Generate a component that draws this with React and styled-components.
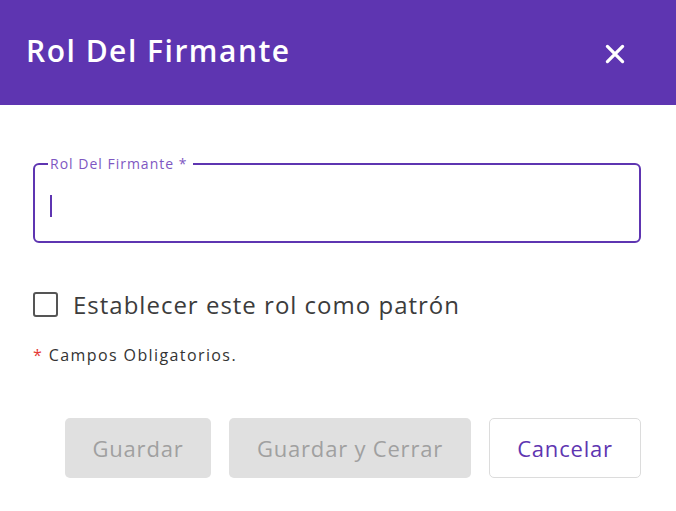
import React from 'react'
import styled, { createGlobalStyle } from 'styled-components'

const Global = createGlobalStyle`
  html, body { margin:0; padding:0; background:#fff; }
  body { font-family: "Open Sans", "Noto Sans", sans-serif; }
  * { box-sizing:border-box; }
`

function App() {
  return (
    <Dialog>
      <Global />
      <Header>
        <h1>Rol Del Firmante</h1>
        <Close aria-label="cerrar">
          <svg width="26" height="26" viewBox="0 0 24 24">
            <path d="M5 5 L19 19 M19 5 L5 19" stroke="#fff" strokeWidth="3" strokeLinecap="round" />
          </svg>
        </Close>
      </Header>
      <Body>
        <Field>
          <legend>Rol Del Firmante *</legend>
          <Caret />
        </Field>
        <Check>
          <span className="box" />
          <span>Establecer este rol como patrón</span>
        </Check>
        <Note><span>*</span> Campos Obligatorios.</Note>
        <Actions>
          <Button disabled w={146}>Guardar</Button>
          <Button disabled w={242}>Guardar y Cerrar</Button>
          <Button outline w={152}>Cancelar</Button>
        </Actions>
      </Body>
    </Dialog>
  )
}

const Dialog = styled.div`
  width:676px;
  height:511px;
  background:#fff;
  overflow:hidden;
`
const Header = styled.div`
  height:105px;
  background:#5e35b1;
  display:flex;
  align-items:center;
  justify-content:space-between;
  padding:0 48px 0 26px;
  h1{
    margin:0 0 4px 0;
    color:#fff;
    font-size:30px;
    font-weight:600;
    letter-spacing:1.5px;
  }
`
const Close = styled.div`
  display:flex;
  margin-top:2px;
`
const Body = styled.div`
  padding:0 35px 0 33px;
`
const Field = styled.fieldset`
  margin:52px 0 0 0;
  height:86px;
  border:2px solid #5e35b1;
  border-radius:6px;
  padding:0 0 0 15px;
  legend{
    padding:0 6px 0 2px;
    margin-left:-2px;
    font-size:14px;
    color:#7e57c2;
    line-height:14px;
    letter-spacing:1px;
  }
`
const Caret = styled.div`
  width:2px;
  height:22px;
  background:#5e35b1;
  margin-top:24px;
`
const Check = styled.div`
  display:flex;
  align-items:center;
  gap:15px;
  margin-top:45px;
  font-size:24px;
  letter-spacing:1px;
  color:#3c3c3c;
  .box{
    width:25px;
    height:25px;
    border:2px solid #555;
    border-radius:3px;
  }
`
const Note = styled.div`
  margin-top:24px;
  font-size:16px;
  line-height:20px;
  letter-spacing:1.4px;
  color:#333;
  span{ color:#e53935; }
`
const Actions = styled.div`
  display:flex;
  justify-content:flex-end;
  gap:18px;
  margin-top:53px;
`
const Button = styled.button`
  width:${p => p.w}px;
  height:60px;
  border-radius:5px;
  font-family:inherit;
  font-size:22px;
  letter-spacing:0.8px;
  border:${p => p.outline ? '1px solid #dcdcdc' : 'none'};
  background:${p => p.outline ? '#fff' : '#e0e0e0'};
  color:${p => p.outline ? '#5e35b1' : '#a0a0a0'};
`

export default App
